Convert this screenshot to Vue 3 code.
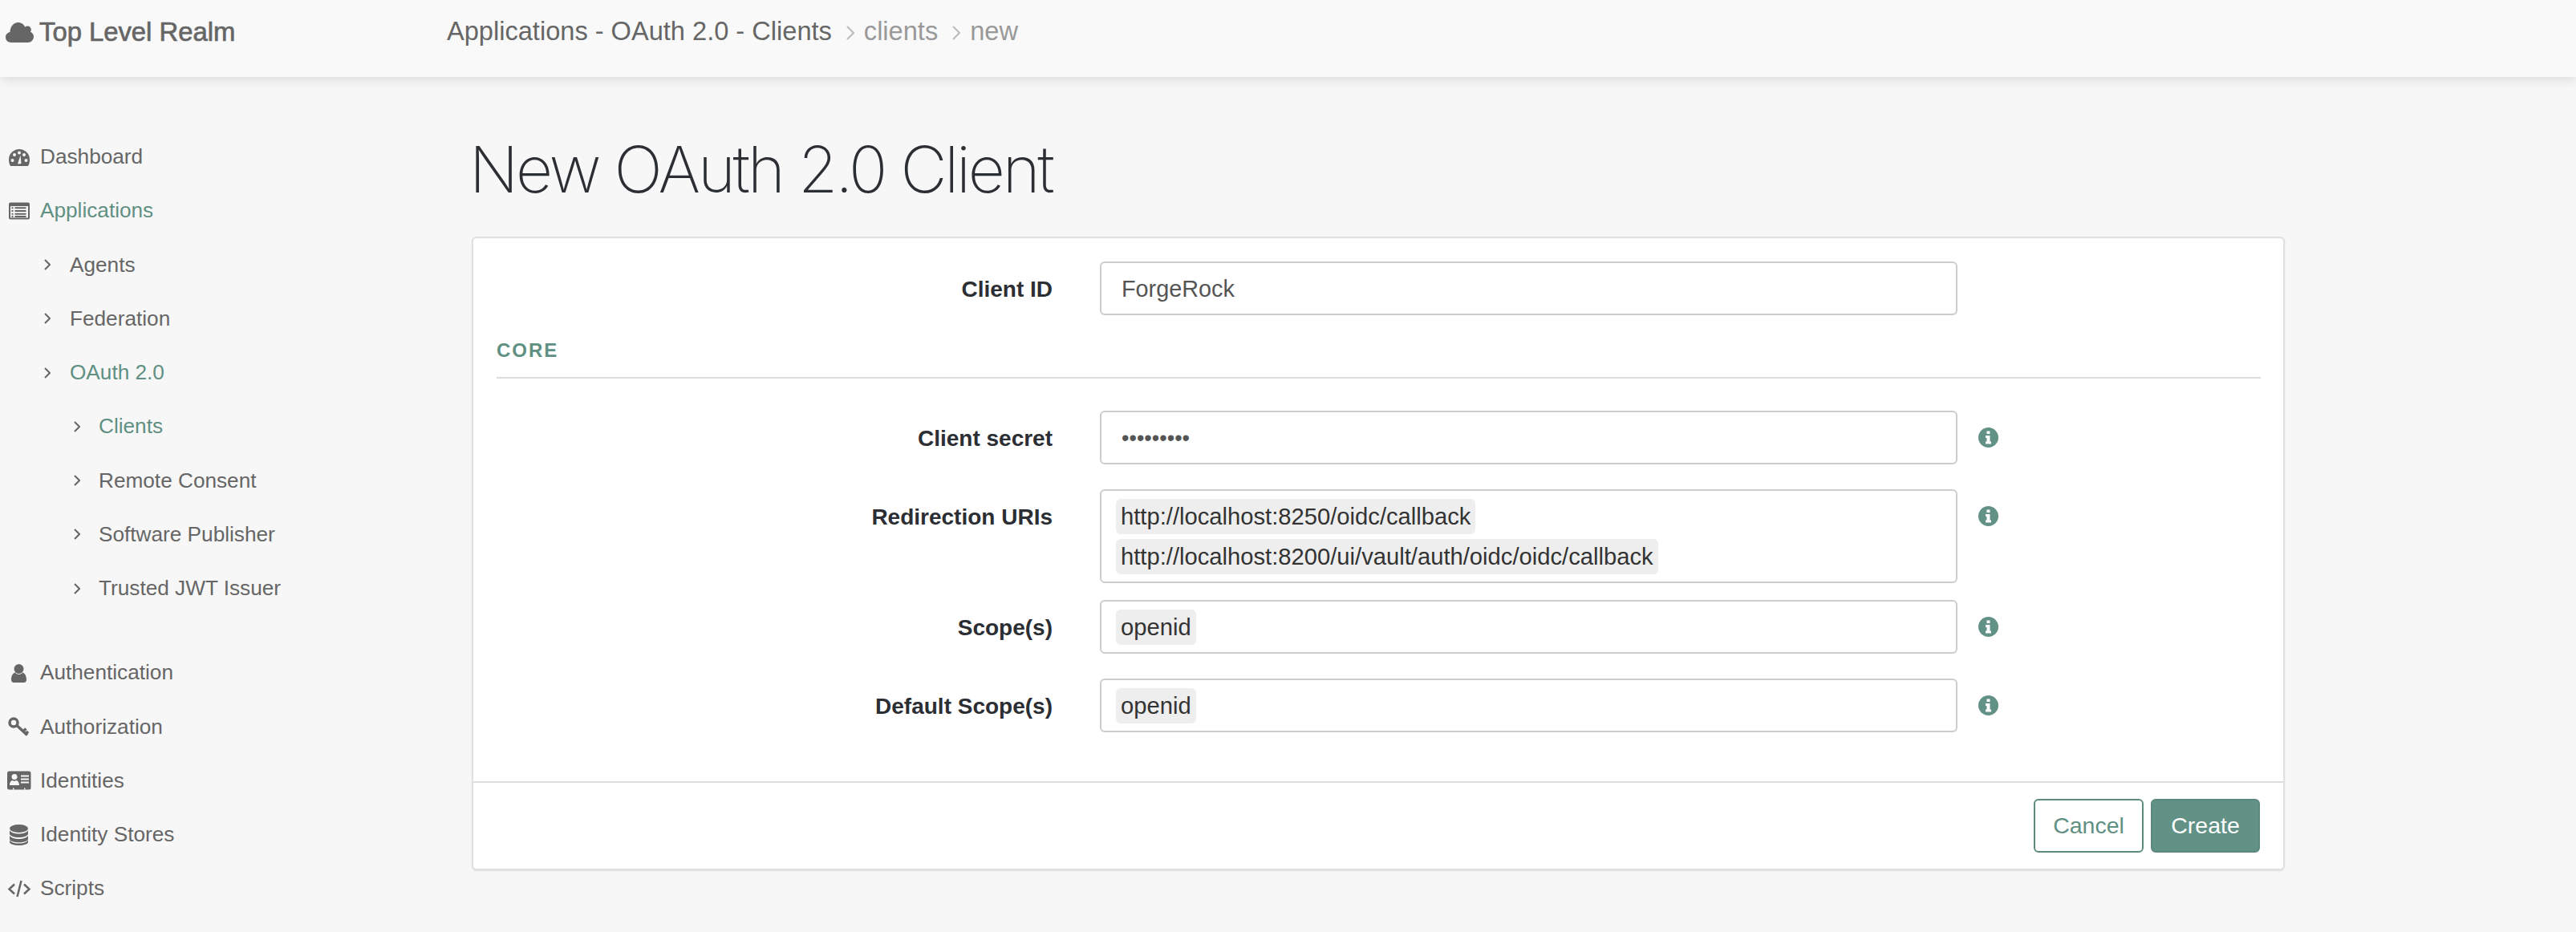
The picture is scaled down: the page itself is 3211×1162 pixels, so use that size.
<script setup>
const topItems = [
  { label: 'Dashboard', icon: 'dashboard' },
  { label: 'Applications', icon: 'list', active: true },
]
const appItems = [
  { label: 'Agents', depth: 1 },
  { label: 'Federation', depth: 1 },
  { label: 'OAuth 2.0', depth: 1, active: true },
  { label: 'Clients', depth: 2, active: true },
  { label: 'Remote Consent', depth: 2 },
  { label: 'Software Publisher', depth: 2 },
  { label: 'Trusted JWT Issuer', depth: 2 },
]
const bottomItems = [
  { label: 'Authentication', icon: 'user' },
  { label: 'Authorization', icon: 'key' },
  { label: 'Identities', icon: 'card' },
  { label: 'Identity Stores', icon: 'db' },
  { label: 'Scripts', icon: 'code' },
]
const fields = [
  { label: 'Client secret', secret: '•••••••••' },
  { label: 'Redirection URIs', chips: ['http://localhost:8250/oidc/callback', 'http://localhost:8200/ui/vault/auth/oidc/oidc/callback'], tight: true },
  { label: 'Scope(s)', chips: ['openid'] },
  { label: 'Default Scope(s)', chips: ['openid'] },
]
</script>

<template>
  <div class="page">
    <header class="topbar">
      <div class="brand">
        <svg class="cloud" viewBox="0 0 35 25" width="35" height="25">
          <path d="M7 25C3 25 0 22.200 0 18.500C0 15.200 2.300 12.600 5.500 12.100C5.500 5.500 10 0 15.500 0C19.700 0 22.800 2.300 24.200 5.800C25.100 4.900 26.200 4.500 27.400 4.500C29.900 4.500 31.800 6.500 31.800 9C31.800 10 31.500 11 31 11.800C33.500 12.900 35 15.200 35 17.800C35 21.800 31.800 25 27.800 25Z" />
        </svg>
        <span class="brand-name">Top Level Realm</span>
      </div>
      <nav class="crumbs">
        <span>Applications - OAuth 2.0 - Clients</span>
        <svg class="crumb-sep" viewBox="0 0 10 18" width="10" height="18"><path d="M1 1l8 8-8 8" /></svg>
        <span class="crumb-light">clients</span>
        <svg class="crumb-sep" viewBox="0 0 10 18" width="10" height="18"><path d="M1 1l8 8-8 8" /></svg>
        <span class="crumb-light">new</span>
      </nav>
    </header>

    <div class="body">
      <aside class="sidebar">
        <ul class="nav">
          <li v-for="item in topItems" :key="item.label" class="nav-item" :class="{ active: item.active }">
            <span class="nav-icon">
              <svg viewBox="0 0 30 30" width="30" height="30">
                <template v-if="item.icon === 'dashboard'">
                  <path d="M15 5A13 13 0 0 1 28 18C28 21 27.300 24 26 26L4 26C2.700 24 2 21 2 18A13 13 0 0 1 15 5Z" class="ink" />
                  <circle cx="6.500" cy="19" r="2" class="paper" />
                  <circle cx="9" cy="12" r="2" class="paper" />
                  <circle cx="15" cy="9.500" r="2" class="paper" />
                  <circle cx="21" cy="12" r="2" class="paper" />
                  <circle cx="23.500" cy="19" r="2" class="paper" />
                  <path d="M13 23.500L16.500 12.500L17.500 23Z" class="paper" />
                </template>
                <template v-else>
                  <rect x="2" y="4.500" width="26" height="21" rx="2" class="ink" />
                  <rect x="4" y="9" width="22" height="14.500" class="paper" />
                  <path d="M9.500 11.200h14M9.500 15h14M9.500 18.800h14M9.500 22h14" class="ink-line" />
                  <path d="M5.500 11.200h2M5.500 15h2M5.500 18.800h2M5.500 22h2" class="ink-line" />
                </template>
              </svg>
            </span>
            <span>{{ item.label }}</span>
          </li>
          <li v-for="item in appItems" :key="item.label" class="nav-item" :class="[`depth-${item.depth}`, { active: item.active }]">
            <svg class="chevron" viewBox="0 0 8 14" width="8" height="14"><path d="M1 1l6 6-6 6" /></svg>
            <span>{{ item.label }}</span>
          </li>
        </ul>
        <ul class="nav nav-bottom">
          <li v-for="item in bottomItems" :key="item.label" class="nav-item">
            <span class="nav-icon">
              <svg viewBox="0 0 30 30" width="30" height="30">
                <template v-if="item.icon === 'user'">
                  <circle cx="14.500" cy="10" r="6" class="ink" />
                  <path d="M5 23.500C5 18.500 7 15.500 9.500 14.500C11 16 13 16.800 14.500 16.800C16 16.800 18 16 19.500 14.500C22 15.500 24 18.500 24 23.500C24 25.800 22.700 27 21 27H8C6.300 27 5 25.800 5 23.500Z" class="ink" />
                </template>
                <template v-else-if="item.icon === 'key'">
                  <circle cx="8" cy="10" r="5" class="key-ring" />
                  <path d="M12 13.500L25 25.500M20 20.500L23.500 17.500M23.500 23.500L26 21" class="key-line" />
                </template>
                <template v-else-if="item.icon === 'card'">
                  <rect x="0" y="3.500" width="29.500" height="23" rx="2.500" class="ink" />
                  <circle cx="9" cy="10.500" r="3.500" class="paper" />
                  <path d="M3 21C3 17 5 15.500 6.500 15C8 16 10 16 11.500 15C13 15.500 15 17 15 21Z" class="paper" />
                  <path d="M17 8.500h10v2H17zM17 12.500h10v2H17zM17 16.500h10v2H17z" class="paper" />
                  <path d="M7 24.500h1.500v2H7zM21 24.500h1.500v2H21z" class="paper" />
                </template>
                <template v-else-if="item.icon === 'db'">
                  <ellipse cx="14.500" cy="7" rx="11.500" ry="5" class="ink" />
                  <path d="M3 9.500V13.500C3 16 8 18 14.500 18S26 16 26 13.500V9.500C24 12.300 19.500 13.500 14.500 13.500S5 12.300 3 9.500Z" class="ink" />
                  <path d="M3 16V20C3 22.500 8 24.300 14.500 24.300S26 22.500 26 20V16C24 18.800 19.500 20 14.500 20S5 18.800 3 16Z" class="ink" />
                  <path d="M3 21.500V24C3 26.300 8 28 14.500 28S26 26.300 26 24V21.500C24 24.500 19.500 25.600 14.500 25.600S5 24.500 3 21.500Z" class="ink" />
                </template>
                <template v-else>
                  <path d="M9 9.500L2.500 15.500L9 21.500M21 9.500L27.500 15.500L21 21.500M17.500 5L12.500 25" class="code-line" />
                </template>
              </svg>
            </span>
            <span>{{ item.label }}</span>
          </li>
        </ul>
      </aside>

      <main class="main">
        <h1 class="title">New OAuth 2.0 Client</h1>
        <section class="card">
          <form class="form" @submit.prevent>
            <div class="row">
              <label class="row-label">Client ID</label>
              <div class="field field-text">ForgeRock</div>
            </div>

            <h2 class="section-title">CORE</h2>

            <div v-for="field in fields" :key="field.label" class="row row-spaced" :class="{ tight: field.tight }">
              <label class="row-label">{{ field.label }}</label>
              <div v-if="field.secret" class="field field-text field-secret">{{ field.secret }}</div>
              <div v-else class="field field-chips">
                <span v-for="chip in field.chips" :key="chip" class="chip">{{ chip }}</span>
              </div>
              <svg class="info" viewBox="0 0 25 25" width="25" height="25">
                <circle cx="12.500" cy="12.500" r="12.500" />
                <path d="M10.500 4.500h4v3.500h-4zM9 10h5.500v7.500H16V20.500H9V17.500h1.500v-4.500H9z" />
              </svg>
            </div>
          </form>
          <footer class="card-footer">
            <button type="button" class="btn btn-outline">Cancel</button>
            <button type="button" class="btn btn-primary">Create</button>
          </footer>
        </section>
      </main>
    </div>
  </div>
</template>

<style>
html,
body {
  background: #f6f6f6;
}
</style>

<style scoped>
.page {
  width: 3211px;
  min-height: 1162px;
  overflow: hidden;
  font-family: "Liberation Sans", Arial, sans-serif;
  color: #666;
  background: #f7f7f7;
}
.topbar {
  position: relative;
  display: flex;
  align-items: center;
  height: 96px;
  padding: 0 0 18px 7px;
  box-sizing: border-box;
  background: #f9f9f9;
  box-shadow: 0 3px 14px rgba(0, 0, 0, 0.12);
}
.brand {
  display: flex;
  align-items: center;
  width: 550px;
  gap: 7px;
  padding-top: 2px;
}
.cloud {
  fill: #666;
}
.brand-name {
  font-size: 32.8px;
  -webkit-text-stroke: 0.7px #666;
}
.crumbs {
  display: flex;
  align-items: center;
  font-size: 32.6px;
  color: #666;
}
.crumb-sep {
  margin: 3px 12px 0 18px;
  fill: none;
  stroke: #bbb;
  stroke-width: 2;
}
.crumb-light {
  color: #999;
}
.body {
  display: flex;
}
.sidebar {
  width: 588px;
  flex-shrink: 0;
  padding-top: 66px;
  box-sizing: border-box;
}
.nav {
  margin: 0;
  padding: 0;
  list-style: none;
}
.nav-bottom {
  margin-top: 38px;
}
.nav-item {
  display: flex;
  align-items: center;
  height: 67.25px;
  font-size: 26.2px;
  color: #666;
}
.nav-item.active {
  color: #5f9083;
}
.nav-icon {
  display: flex;
  align-items: center;
  justify-content: center;
  width: 50px;
  padding-right: 2px;
  box-sizing: border-box;
}
.depth-1 {
  padding-left: 55px;
}
.depth-2 {
  padding-left: 92px;
}
.chevron {
  margin-right: 24px;
  fill: none;
  stroke: #666;
  stroke-width: 2;
}
.depth-2 .chevron {
  margin-right: 23px;
}
.ink {
  fill: #666;
}
.paper {
  fill: #f7f7f7;
}
.ink-line {
  stroke: #666;
  stroke-width: 2;
  fill: none;
}
.key-ring {
  fill: none;
  stroke: #666;
  stroke-width: 3.5;
}
.key-line {
  fill: none;
  stroke: #666;
  stroke-width: 3.5;
}
.code-line {
  fill: none;
  stroke: #666;
  stroke-width: 2.5;
}
.main {
  width: 2260px;
}
.title {
  margin: 71px 0 40px -3px;
  font-family: Inter, Roboto, "Liberation Sans", sans-serif;
  font-size: 80px;
  font-weight: 150;
  line-height: 88px;
  letter-spacing: -3.2px;
  color: #2b2e33;
  white-space: nowrap;
}
.card {
  box-sizing: border-box;
  height: 790px;
  border: 2px solid #e0e0e0;
  border-radius: 6px;
  background: #fff;
  box-shadow: 0 1px 2px rgba(0, 0, 0, 0.1);
}
.form {
  box-sizing: border-box;
  height: 679px;
  padding: 29px 28px 0 29px;
  border-bottom: 2px solid #ddd;
}
.row {
  display: flex;
  align-items: flex-start;
}
.row-spaced {
  margin-bottom: 31px;
}
.row-spaced.tight {
  margin-bottom: 21px;
}
.row-label {
  width: 693px;
  height: 67px;
  flex-shrink: 0;
  margin-right: 59px;
  font-size: 28px;
  font-weight: 700;
  line-height: 69px;
  color: #2b2e33;
  text-align: right;
}
.field {
  box-sizing: border-box;
  width: 1069px;
  flex-shrink: 0;
  border: 2px solid #ccc;
  border-radius: 6px;
  background: #fff;
  color: #555;
  font-size: 29.2px;
}
.field-text {
  height: 67px;
  padding-left: 25px;
  font-size: 28.8px;
  line-height: 64px;
}
.field-secret {
  padding-left: 25px;
  font-size: 27px;
}
.field-chips {
  display: flex;
  flex-direction: column;
  align-items: flex-start;
  gap: 6px;
  padding: 10px 0 9px 18px;
}
.chip {
  height: 44px;
  padding: 0 6px;
  border-radius: 6px;
  background: #eee;
  color: #333;
  line-height: 44px;
}
.info {
  margin: 21px 0 0 26px;
  flex-shrink: 0;
}
.info circle {
  fill: #629185;
}
.info path {
  fill: #fff;
}
.section-title {
  margin: 28px 0 40px;
  padding-bottom: 17px;
  border-bottom: 2px solid #ddd;
  font-size: 24px;
  font-weight: 700;
  line-height: 32px;
  letter-spacing: 2px;
  color: #5f9083;
}
.card-footer {
  display: flex;
  justify-content: flex-end;
  gap: 9px;
  padding: 20px 29px 0 0;
}
.btn {
  box-sizing: border-box;
  height: 67px;
  border-radius: 6px;
  font-family: inherit;
  font-size: 28.5px;
  padding: 0;
}
.btn-outline {
  width: 137px;
  border: 2px solid #5d8b7f;
  background: #fff;
  color: #5f9083;
}
.btn-primary {
  width: 136px;
  border: 2px solid #5c897d;
  background: #629185;
  color: #fff;
}
</style>
